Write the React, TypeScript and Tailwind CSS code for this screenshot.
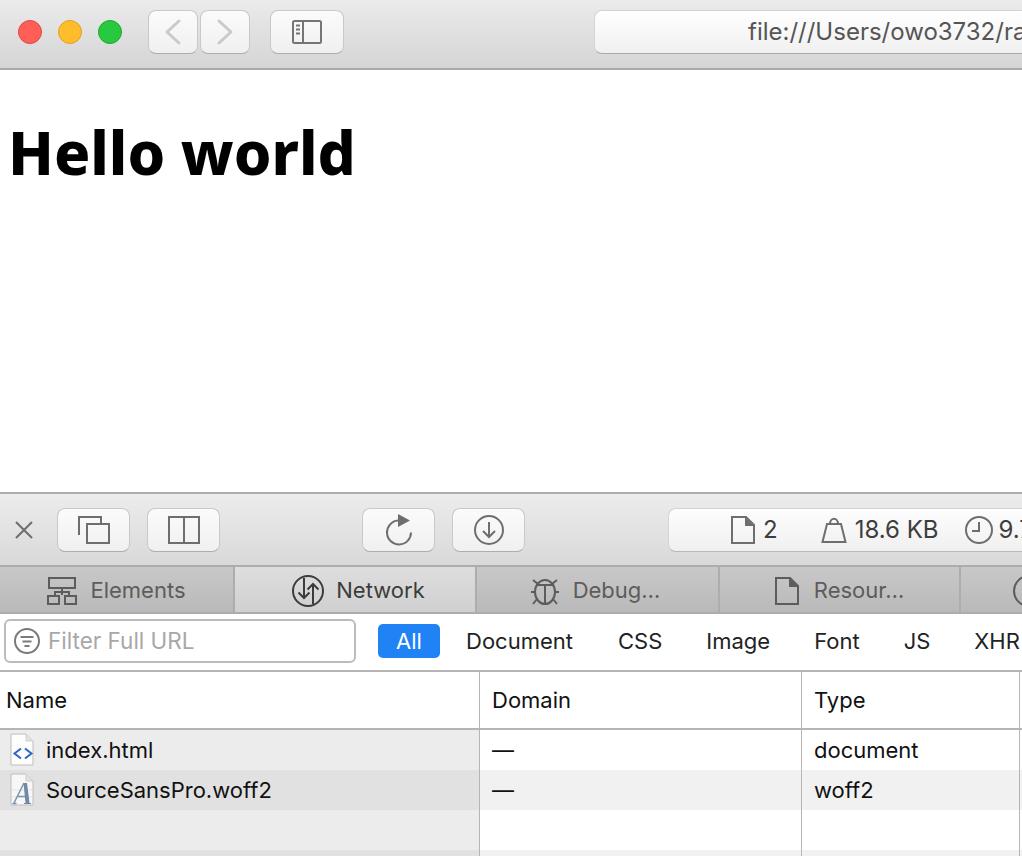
import type { ReactNode } from 'react';

function ToolButton({ className, children }: { className: string; children?: ReactNode }) {
  return (
    <div
      className={`flex h-[44px] shrink-0 items-center justify-center rounded-[8px] border border-[#c9c9c9] border-b-[#adadad] bg-gradient-to-b from-[#fbfbfb] to-[#f0f0f0] ${className}`}
    >
      {children}
    </div>
  );
}

function PageIcon({ stroke = '#6e6e6e' }: { stroke?: string }) {
  return (
    <svg width="24" height="28" viewBox="0 0 24 28" fill="none" stroke={stroke} strokeWidth="2" className="shrink-0">
      <path d="M1 1h14l8 8v18H1z" />
      <path d="M14 1v9h9z" fill={stroke} stroke="none" />
    </svg>
  );
}

function Tab({ label, icon, active, className }: { label: string; icon: ReactNode; active?: boolean; className: string }) {
  return (
    <div
      className={`flex h-full shrink-0 items-center justify-center border-r-2 border-[#adadad] pt-[2px] ${className} ${
        active ? 'bg-gradient-to-b from-[#dedede] to-[#d0d0d0] text-[#3c3c3c]' : 'bg-gradient-to-b from-[#c8c8c8] to-[#b9b9b9] text-[#5c5c5c]'
      }`}
    >
      {icon}
      <span className="text-[22px]">{label}</span>
    </div>
  );
}

function HtmlFileIcon() {
  return (
    <svg width="26" height="34" viewBox="0 0 26 34">
      <path d="M1 1h15l7 7v24H1z" fill="#fdfdfd" stroke="#bdbdbd" />
      <path d="M16 1v7h7z" fill="#e2e2e2" stroke="#cfcfcf" />
      <path d="M11 15.500l-6.500 5 6.500 5M15 15.500l6.500 5-6.500 5" fill="none" stroke="#2a66c8" strokeWidth="2" />
    </svg>
  );
}

function FontFileIcon() {
  return (
    <svg width="26" height="34" viewBox="0 0 26 34">
      <path d="M1 1h15l7 7v24H1z" fill="#f7f7f7" stroke="#bdbdbd" />
      <path d="M16 1v7h7z" fill="#e2e2e2" stroke="#cfcfcf" />
      <path d="M2 17h20M2 24h20" stroke="#dfe4ea" />
      <path d="M4 30L14 10M8 23.500h8M2.500 30.500h4" fill="none" stroke="#7d93ad" strokeWidth="1.500" />
      <path d="M13.500 10h3.500l2.500 20h1.500v1h-7v-1h1.500z" fill="#7289a5" />
    </svg>
  );
}

const rows = [
  { name: 'index.html', icon: <HtmlFileIcon />, domain: '—', type: 'document' },
  { name: 'SourceSansPro.woff2', icon: <FontFileIcon />, domain: '—', type: 'woff2' },
  { name: '', icon: null, domain: '', type: '' },
  { name: '', icon: null, domain: '', type: '' },
];

const filters = [
  { label: 'Document', w: 'ml-[26px]' },
  { label: 'CSS', w: 'ml-[45px]' },
  { label: 'Image', w: 'ml-[44px]' },
  { label: 'Font', w: 'ml-[44px]' },
  { label: 'JS', w: 'ml-[44px]' },
  { label: 'XHR', w: 'ml-[44px]' },
];

export default function App() {
  return (
    <div className="flex h-[856px] w-[1022px] flex-col overflow-hidden bg-white font-[Inter,sans-serif]">
      {/* browser toolbar */}
      <div className="flex h-[70px] shrink-0 items-center border-b-2 border-[#aaaaaa] bg-gradient-to-b from-[#ebebeb] to-[#d5d5d5] pb-[4px] pl-[18px]">
        <div className="h-[24px] w-[24px] shrink-0 rounded-full border border-[#e2463f] bg-[#ff5f57]" />
        <div className="ml-[16px] h-[24px] w-[24px] shrink-0 rounded-full border border-[#dfa023] bg-[#ffbd2e]" />
        <div className="ml-[16px] h-[24px] w-[24px] shrink-0 rounded-full border border-[#1aab29] bg-[#28c940]" />
        <ToolButton className="ml-[26px] w-[50px]">
          <svg width="18" height="28" viewBox="0 0 18 28" fill="none" stroke="#cacaca" strokeWidth="3" strokeLinecap="round" strokeLinejoin="round">
            <path d="M15 3L3 14l12 11" />
          </svg>
        </ToolButton>
        <ToolButton className="ml-[2px] w-[50px]">
          <svg width="18" height="28" viewBox="0 0 18 28" fill="none" stroke="#cacaca" strokeWidth="3" strokeLinecap="round" strokeLinejoin="round">
            <path d="M3 3l12 11L3 25" />
          </svg>
        </ToolButton>
        <ToolButton className="ml-[20px] w-[74px]">
          <svg width="30" height="24" viewBox="0 0 30 24" fill="none" stroke="#757575" strokeWidth="2">
            <rect x="1" y="1" width="28" height="22" rx="1.500" />
            <path d="M11 1v22" />
            <path d="M4 5.500h4M4 9.500h4M4 13.500h4" />
          </svg>
        </ToolButton>
        <div className="ml-[250px] flex h-[44px] w-[600px] shrink-0 items-center rounded-[8px] border border-[#d4d4d4] border-b-[#aaaaaa] bg-gradient-to-b from-[#ffffff] to-[#f0f0f0] pl-[153px]">
          <span className="whitespace-nowrap text-[24px] text-[#555555]">file:///Users/owo3732/ra</span>
        </div>
      </div>

      {/* page */}
      <div className="h-[422px] shrink-0 bg-white pl-[8px] pt-[42px]">
        <h1 className="font-[Noto_Sans,sans-serif] text-[60px] leading-[80px] font-extrabold text-black">Hello world</h1>
      </div>

      {/* devtools toolbar */}
      <div className="flex h-[75px] shrink-0 items-center border-y-2 border-[#adadad] bg-gradient-to-b from-[#ececec] to-[#d9d9d9] pl-[15px]">
        <svg width="18" height="18" viewBox="0 0 18 18" fill="none" stroke="#6e6e6e" strokeWidth="2" className="shrink-0">
          <path d="M1 1l16 16M17 1L1 17" />
        </svg>
        <ToolButton className="ml-[24px] w-[73px]">
          <svg width="32" height="28" viewBox="0 0 32 28" fill="none" stroke="#6e6e6e" strokeWidth="2">
            <path d="M1 19V1h22v7" />
            <rect x="9" y="8" width="22" height="19" />
          </svg>
        </ToolButton>
        <ToolButton className="ml-[17px] w-[73px]">
          <svg width="32" height="28" viewBox="0 0 32 28" fill="none" stroke="#6e6e6e" strokeWidth="2">
            <rect x="1" y="1" width="30" height="26" />
            <path d="M16 1v26" />
          </svg>
        </ToolButton>
        <ToolButton className="ml-[142px] w-[73px]">
          <svg width="28" height="32" viewBox="0 0 28 32" fill="none" stroke="#6e6e6e" strokeWidth="2">
            <path d="M13 6.500A12 12 0 1 0 26 18.500" />
            <path d="M13 0l12 6.500L13 13z" fill="#6e6e6e" stroke="none" />
          </svg>
        </ToolButton>
        <ToolButton className="ml-[17px] w-[73px]">
          <svg width="30" height="30" viewBox="0 0 30 30" fill="none" stroke="#6e6e6e" strokeWidth="2">
            <circle cx="15" cy="15" r="14" />
            <path d="M15 7v15M9 16l6 6 6-6" />
          </svg>
        </ToolButton>
        <div className="ml-[143px] flex h-[44px] w-[500px] shrink-0 items-center rounded-[8px] border border-[#d4d4d4] border-b-[#b8b8b8] bg-gradient-to-b from-[#fdfdfd] to-[#f0f0f0] pl-[62px] text-[24px] text-[#3e3e3e]">
          <PageIcon />
          <span className="ml-[8px]">2</span>
          <svg width="26" height="26" viewBox="0 0 26 26" fill="none" stroke="#6e6e6e" strokeWidth="2" className="ml-[43px] shrink-0">
            <path d="M6 25L1.500 25 6 7h14l4.500 18z" />
            <path d="M9 7c0-7 8-7 8 0" />
          </svg>
          <span className="ml-[8px] whitespace-nowrap">18.6 KB</span>
          <svg width="28" height="28" viewBox="0 0 28 28" fill="none" stroke="#6e6e6e" strokeWidth="2" className="ml-[27px] shrink-0">
            <circle cx="14" cy="14" r="13" />
            <path d="M14 6v9H7" />
          </svg>
          <span className="ml-[5px] whitespace-nowrap">9.7</span>
        </div>
      </div>

      {/* tabs */}
      <div className="flex h-[47px] shrink-0 border-b-2 border-[#adadad]">
        <Tab
          label="Elements"
          className="w-[235px] gap-[13px]"
          icon={
            <svg width="30" height="28" viewBox="0 0 30 28" fill="none" stroke="#5c5c5c" strokeWidth="2">
              <rect x="2" y="1" width="26" height="10" />
              <path d="M15 11v7M8 18v-3h14v3" />
              <rect x="1" y="19" width="11" height="8" />
              <rect x="18" y="19" width="11" height="8" />
            </svg>
          }
        />
        <Tab
          label="Network"
          active
          className="w-[242px] gap-[12px] pl-[7px]"
          icon={
            <svg width="32" height="32" viewBox="0 0 32 32" fill="none" stroke="#3c3c3c" strokeWidth="2">
              <circle cx="16" cy="16" r="15" />
              <path d="M12 3v20M6.500 17.500L12 23l5.500-5.500M21 29V9M15.500 14.500L21 9l5.500 5.500" />
            </svg>
          }
        />
        <Tab
          label="Debug…"
          className="w-[243px] gap-[13px] pr-[5px]"
          icon={
            <svg width="30" height="30" viewBox="0 0 30 30" fill="none" stroke="#5c5c5c" strokeWidth="2">
              <ellipse cx="15" cy="16" rx="10" ry="12" />
              <path d="M6 9h18M15 9v19M1 16h4M25 16h4M3 4l5 4M27 4l-5 4M3 28l4-5M27 28l-4-5" />
            </svg>
          }
        />
        <Tab label="Resour…" className="w-[241px] gap-[15px]" icon={<PageIcon stroke="#5c5c5c" />} />
        <div className="flex flex-1 items-center bg-gradient-to-b from-[#c8c8c8] to-[#b9b9b9] pl-[52px] pt-[2px]">
          <svg width="32" height="32" viewBox="0 0 32 32" fill="none" stroke="#5c5c5c" strokeWidth="2" className="shrink-0">
            <circle cx="16" cy="16" r="15" />
          </svg>
        </div>
      </div>

      {/* filter bar */}
      <div className="flex h-[58px] shrink-0 items-center border-b-2 border-[#b5b5b5] pb-[2px] pl-[4px]">
        <div className="flex h-[44px] w-[352px] shrink-0 items-center rounded-[6px] border-2 border-[#bcbcbc] pl-[8px]">
          <svg width="26" height="26" viewBox="0 0 26 26" fill="none" stroke="#7a7a7a" strokeWidth="2">
            <circle cx="13" cy="13" r="12" />
            <path d="M6.500 9h13M8.500 13.500h9M10.500 18h5" />
          </svg>
          <span className="ml-[8px] text-[22.500px] text-[#a8a8a8]">Filter Full URL</span>
        </div>
        <div className="ml-[22px] flex h-[34px] w-[62px] shrink-0 items-center justify-center rounded-[5px] bg-[#1f82f5] text-[22px] text-white">All</div>
        {filters.map((f) => (
          <span key={f.label} className={`shrink-0 whitespace-nowrap text-[22px] text-[#222222] ${f.w}`}>
            {f.label}
          </span>
        ))}
      </div>

      {/* table head */}
      <div className="flex h-[58px] shrink-0 border-b-2 border-[#b5b5b5] text-[22px] text-[#111111]">
        <div className="flex w-[480px] shrink-0 items-center border-r border-[#b5b5b5] pl-[6px]">Name</div>
        <div className="flex w-[322px] shrink-0 items-center border-r border-[#b5b5b5] pl-[12px]">Domain</div>
        <div className="flex w-[218px] shrink-0 items-center border-r border-[#b5b5b5] pl-[12px]">Type</div>
      </div>

      {/* table rows */}
      <div className="flex flex-1 flex-col text-[22px] text-[#111111]">
        {rows.map((r, i) => (
          <div key={i} className={`flex h-[40px] shrink-0 ${i % 2 ? 'bg-[#f1f1f1]' : 'bg-white'}`}>
            <div className={`flex w-[480px] shrink-0 items-center border-r border-[#b5b5b5] pl-[10px] ${i % 2 ? 'bg-[#e1e1e1]' : 'bg-[#ececec]'}`}>
              {r.icon}
              {r.name && <span className="ml-[10px]">{r.name}</span>}
            </div>
            <div className="flex w-[322px] shrink-0 items-center border-r border-[#b5b5b5] pl-[12px]">{r.domain}</div>
            <div className="flex w-[218px] shrink-0 items-center border-r border-[#b5b5b5] pl-[12px]">{r.type}</div>
          </div>
        ))}
      </div>
    </div>
  );
}
